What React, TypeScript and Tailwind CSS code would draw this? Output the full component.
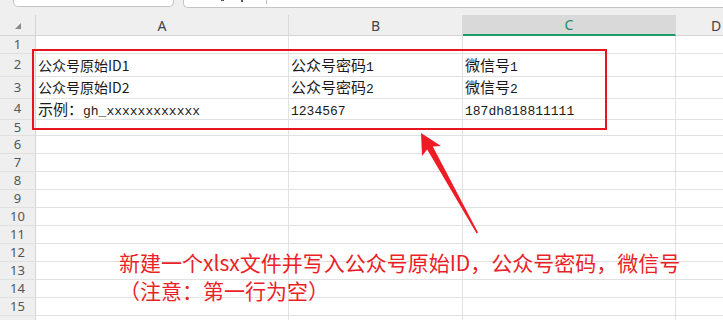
import type { ReactNode } from 'react';

const cjk = "font-['Noto_Sans_CJK_SC',sans-serif]";
const mono = "font-['Liberation_Mono','Noto_Sans_CJK_SC',monospace]";

// SimSun-like cell text: CJK part a bit larger, latin part monospace
function Song({ zh, en }: { zh?: string; en?: string }) {
  return (
    <span className="whitespace-nowrap text-[#1a1a1a]">
      {zh && <span className={`${cjk} text-[15px]`}>{zh}</span>}
      {en && <span className={`${mono} text-[13px]`}>{en}</span>}
    </span>
  );
}

function Hei({ children }: { children: ReactNode }) {
  return (
    <span className={`${cjk} text-[14px] whitespace-nowrap text-[#1a1a1a]`}>
      {children}
    </span>
  );
}

type Row = { n: number; h: string; cells: ReactNode[] };

const rows: Row[] = [
  { n: 1, h: 'h-[18px]', cells: [] },
  {
    n: 2,
    h: 'h-[23px]',
    cells: [<Hei>公众号原始ID1</Hei>, <Song zh="公众号密码" en="1" />, <Song zh="微信号" en="1" />],
  },
  {
    n: 3,
    h: 'h-[22px]',
    cells: [<Hei>公众号原始ID2</Hei>, <Song zh="公众号密码" en="2" />, <Song zh="微信号" en="2" />],
  },
  {
    n: 4,
    h: 'h-[21px]',
    cells: [<Song zh="示例：" en="gh_xxxxxxxxxxxx" />, <Song en="1234567" />, <Song en="187dh818811111" />],
  },
  { n: 5, h: 'h-[16px]', cells: [] },
  ...[6, 7, 8, 9, 10, 11, 12, 13, 14, 15, 16].map((n) => ({ n, h: 'h-[18px]', cells: [] })),
];

const colW = ['w-[253px]', 'w-[174px]', 'w-[213px]', 'w-[80px]'];

export default function App() {
  return (
    <div className="relative w-[723px] h-[320px] overflow-hidden bg-white font-['Noto_Sans',sans-serif]">
      {/* formula bar remains */}
      <div className="flex h-[15px] bg-[#efefef] items-start">
        <div className="ml-[13px] w-[161px] h-[7px] bg-white border border-t-0 border-[#c4c4c4] rounded-b-[5px]" />
        <div className="ml-[9px] flex-1 h-[8px] bg-white border-b border-l border-[#c4c4c4] rounded-bl-[5px] relative">
          <span className="absolute left-[37px] top-0 w-[3px] h-[1px] bg-[#555]" />
          <span className="absolute left-[57px] top-0 w-[2px] h-[2px] bg-[#555]" />
          <span className="absolute left-[82px] top-0 w-[1px] h-[4px] bg-[#bbb]" />
        </div>
      </div>

      {/* column header */}
      <div className="flex h-[21px] bg-[#efefef]">
        <div className="w-[36px] shrink-0 border-r border-b border-[#d4d4d4] flex items-center justify-center">
          <svg width="6" height="6" viewBox="0 0 6 6" className="ml-[1px] mt-[2px]">
            <polygon points="6,0 6,6 0,6" fill="#8a8a8a" />
          </svg>
        </div>
        {['A', 'B', 'C', 'D'].map((c, i) => (
          <div
            key={c}
            className={`${colW[i]} shrink-0 flex items-center justify-center text-[14px] ${
              c === 'C'
                ? 'bg-[#d9d9d9] border-b-2 border-[#1e9b6b] text-[#1e8a63]'
                : 'border-b border-[#d4d4d4] text-[#444]'
            } ${c !== 'D' ? 'border-r border-r-[#dadada]' : ''}`}
          >
            {c}
          </div>
        ))}
      </div>

      {/* grid rows */}
      {rows.map((r) => (
        <div key={r.n} className={`flex ${r.h}`}>
          <div className="w-[36px] shrink-0 bg-[#efefef] border-r border-b border-r-[#d4d4d4] border-b-[#e0e0e0] flex items-center justify-center text-[13px] text-[#555]">
            {r.n < 16 ? r.n : ''}
          </div>
          {colW.map((w, i) => (
            <div
              key={i}
              className={`${w} shrink-0 border-r border-b border-[#e1e1e1] flex items-center pl-[2px] overflow-hidden`}
            >
              {r.cells[i]}
            </div>
          ))}
        </div>
      ))}

      {/* red highlight box */}
      <div className="absolute left-[32px] top-[49px] w-[575px] h-[81px] border-2 border-[#e8141e]" />

      {/* arrow */}
      <svg className="absolute left-0 top-0" width="723" height="320" viewBox="0 0 723 320">
        <polygon
          points="421,133 441,146 432.8,146.6 478,232.4 476.6,233.4 427.2,149.6 422,156"
          fill="#ee1c25"
        />
      </svg>

      {/* annotation */}
      <div className={`absolute left-[119px] top-[248px] ${cjk} text-[21px] leading-[28px] text-[#ea1f28] whitespace-nowrap`}>
        <div>新建一个xlsx文件并写入公众号原始ID，公众号密码，微信号</div>
        <div>（注意：第一行为空）</div>
      </div>
    </div>
  );
}
